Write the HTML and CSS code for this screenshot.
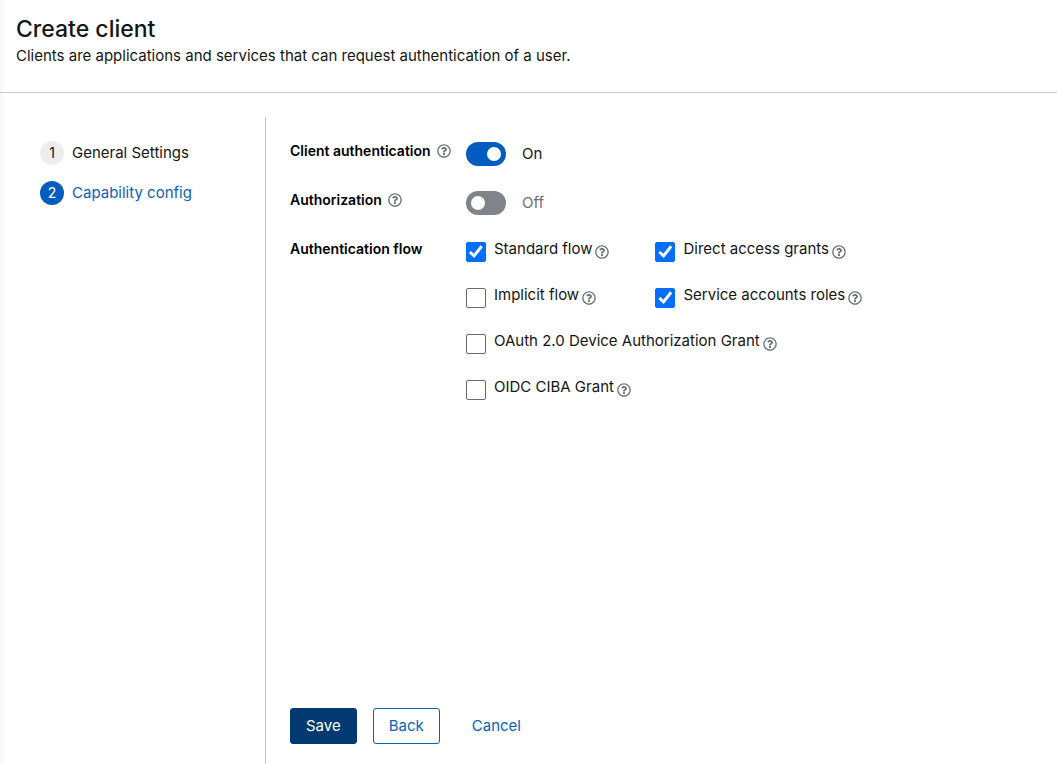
FILE: index.html
```html
<!DOCTYPE html>
<html lang="en">
<head>
<meta charset="utf-8">
<meta name="viewport" content="width=device-width, initial-scale=1">
<title>Create client</title>
<link rel="stylesheet" href="styles.css">
</head>
<body>
<svg class="sprite" aria-hidden="true">
  <symbol id="help" viewBox="0 0 512 512"><path d="M256 8C119.043 8 8 119.083 8 256c0 136.997 111.043 248 248 248s248-111.003 248-248C504 119.083 392.957 8 256 8zm0 448c-110.532 0-200-89.431-200-200 0-110.495 89.472-200 200-200 110.491 0 200 89.471 200 200 0 110.53-89.431 200-200 200zm107.244-255.2c0 67.052-72.421 68.084-72.421 92.863V300c0 6.627-5.373 12-12 12h-45.647c-6.627 0-12-5.373-12-12v-8.659c0-35.745 27.1-50.034 47.579-61.516 17.561-9.845 28.324-16.541 28.324-29.579 0-17.246-21.999-28.693-39.784-28.693-23.189 0-33.894 10.977-48.942 29.969-4.057 5.12-11.46 6.071-16.666 2.124l-27.824-21.098c-5.107-3.872-6.251-11.066-2.644-16.363C184.846 131.491 214.94 112 261.794 112c49.071 0 101.45 38.304 101.45 88.8zM298 368c0 23.159-18.841 42-42 42s-42-18.841-42-42 18.841-42 42-42 42 18.841 42 42z"/></symbol>
</svg>
<div class="page">
  <header class="header">
    <h1 class="title">Create client</h1>
    <p class="intro">Clients are applications and services that can request authentication of a user.</p>
  </header>
  <div class="wizard">
    <nav class="steps" aria-label="Steps">
      <ol class="step-list">
        <li><button class="step" type="button"><span class="step-number">1</span>General Settings</button></li>
        <li><button class="step step-current" type="button" aria-current="step"><span class="step-number">2</span>Capability config</button></li>
      </ol>
    </nav>
    <form class="form">
      <div class="fields">
        <div class="label-cell">
          <label class="label" for="client-auth">Client authentication</label>
          <button class="help" type="button" aria-label="Help for client authentication"><svg class="help-icon"><use href="#help"/></svg></button>
        </div>
        <label class="switch-row"><input class="switch" id="client-auth" type="checkbox" role="switch" checked><span>On</span></label>

        <div class="label-cell">
          <label class="label" for="authorization">Authorization</label>
          <button class="help" type="button" aria-label="Help for authorization"><svg class="help-icon"><use href="#help"/></svg></button>
        </div>
        <label class="switch-row switch-off"><input class="switch" id="authorization" type="checkbox" role="switch"><span>Off</span></label>

        <div class="label-cell"><span class="label" id="flow-label">Authentication flow</span></div>
        <div class="flows" role="group" aria-labelledby="flow-label">
          <div class="flow">
            <input class="check" id="standard" type="checkbox" checked><label class="flow-name" for="standard">Standard flow</label>
            <button class="help" type="button" aria-label="Help for standard flow"><svg class="help-icon"><use href="#help"/></svg></button>
          </div>
          <div class="flow">
            <input class="check" id="direct" type="checkbox" checked><label class="flow-name" for="direct">Direct access grants</label>
            <button class="help" type="button" aria-label="Help for direct access grants"><svg class="help-icon"><use href="#help"/></svg></button>
          </div>
          <div class="flow">
            <input class="check" id="implicit" type="checkbox"><label class="flow-name" for="implicit">Implicit flow</label>
            <button class="help" type="button" aria-label="Help for implicit flow"><svg class="help-icon"><use href="#help"/></svg></button>
          </div>
          <div class="flow">
            <input class="check" id="service" type="checkbox" checked><label class="flow-name" for="service">Service accounts roles</label>
            <button class="help" type="button" aria-label="Help for service accounts roles"><svg class="help-icon"><use href="#help"/></svg></button>
          </div>
          <div class="flow flow-wide">
            <input class="check" id="device" type="checkbox"><label class="flow-name" for="device">OAuth 2.0 Device Authorization Grant</label>
            <button class="help" type="button" aria-label="Help for device authorization grant"><svg class="help-icon"><use href="#help"/></svg></button>
          </div>
          <div class="flow flow-wide">
            <input class="check" id="ciba" type="checkbox"><label class="flow-name" for="ciba">OIDC CIBA Grant</label>
            <button class="help" type="button" aria-label="Help for CIBA grant"><svg class="help-icon"><use href="#help"/></svg></button>
          </div>
        </div>
      </div>
      <footer class="actions">
        <button class="button button-primary" type="submit">Save</button>
        <button class="button button-secondary" type="button">Back</button>
        <button class="button button-link" type="button">Cancel</button>
      </footer>
    </form>
  </div>
</div>
</body>
</html>
```
FILE: styles.css
```css
* { box-sizing: border-box; }

body {
  margin: 0;
  background: #fff;
  color: #151515;
  font: 15px/24px Inter, "Liberation Sans", sans-serif;
}

button {
  padding: 0;
  border: 0;
  background: none;
  color: inherit;
  font: inherit;
  cursor: pointer;
}

.sprite { display: none; }

.page {
  display: flex;
  flex-direction: column;
  min-height: 100vh;
  background: linear-gradient(to right, #f7f7f7, #fff 6px);
}

.header {
  padding: 14px 16px 24px;
  border-bottom: 1px solid #c7c7c7;
}

.title {
  margin: 0;
  font-size: 23px;
  font-weight: 500;
  line-height: 30px;
}

.intro { margin: 0; }

.wizard {
  display: flex;
  flex: 1;
  padding-top: 24px;
}

.steps {
  flex: none;
  width: 266px;
  padding: 24px 40px;
  border-right: 1px solid #c7c7c7;
}

.step-list {
  display: flex;
  flex-direction: column;
  gap: 16px;
  margin: 0;
  padding: 0;
  list-style: none;
}

.step-list li { display: flex; }

.step {
  display: flex;
  gap: 8px;
  white-space: nowrap;
}

.step-number {
  width: 24px;
  border-radius: 50%;
  background: #eee;
  font-size: 14px;
  text-align: center;
}

.step-current { color: #0a62b5; }

.step-current .step-number {
  background: #005cbf;
  color: #fff;
}

.form {
  display: flex;
  flex: 1;
  flex-direction: column;
  justify-content: space-between;
  padding: 24px 24px 20px;
}

.fields {
  display: grid;
  grid-template-columns: 160px 1fr;
  gap: 24px 16px;
}

.label-cell {
  display: flex;
  align-items: center;
  gap: 6px;
  height: 20px;
  white-space: nowrap;
}

.label {
  color: #000;
  font-size: 14px;
  font-weight: 600;
}

.help {
  display: flex;
  color: #6a6e73;
}

.help-icon {
  width: 14px;
  height: 14px;
  fill: currentColor;
}

.switch-row {
  display: flex;
  align-items: center;
  gap: 16px;
  margin-top: 1px;
  height: 24px;
}

.switch-off { color: #6a6e73; }

.switch {
  appearance: none;
  display: flex;
  width: 40px;
  height: 24px;
  margin: 0;
  padding: 5px;
  border-radius: 12px;
  background: #808387;
}

.switch::before {
  content: "";
  width: 14px;
  height: 14px;
  border-radius: 50%;
  background: #fff;
}

.switch:checked {
  justify-content: flex-end;
  background: #005cbf;
}

.flows {
  display: grid;
  grid-template-columns: max-content max-content;
  gap: 23px 46px;
}

.flow {
  display: flex;
  align-items: flex-end;
}

.flow-wide { grid-column: 1 / -1; }

.flow-name {
  align-self: flex-start;
  margin: 0 3px 0 8px;
  line-height: 20px;
}

.flow .help { padding-bottom: 3px; }

.check {
  appearance: none;
  display: grid;
  width: 20px;
  height: 20px;
  margin: 3px 0 0;
  border: 1px solid #6b6b6b;
  border-radius: 2px;
  background: #fff;
}

.check:checked {
  border-color: #006efe;
  background: #006efe;
}

.check:checked::before {
  content: "";
  background: #fff;
  clip-path: polygon(10% 55%, 22% 44%, 38% 60%, 75% 13%, 88% 23%, 40% 84%);
}

.actions {
  display: flex;
  gap: 16px;
}

.button {
  padding: 5px 15px;
  border: 1px solid transparent;
  border-radius: 3px;
}

.button-primary {
  background: #003a70;
  border-color: #003a70;
  color: #fff;
}

.button-secondary {
  border-color: #0a62b5;
  color: #0a62b5;
}

.button-link { color: #0a62b5; }
```
